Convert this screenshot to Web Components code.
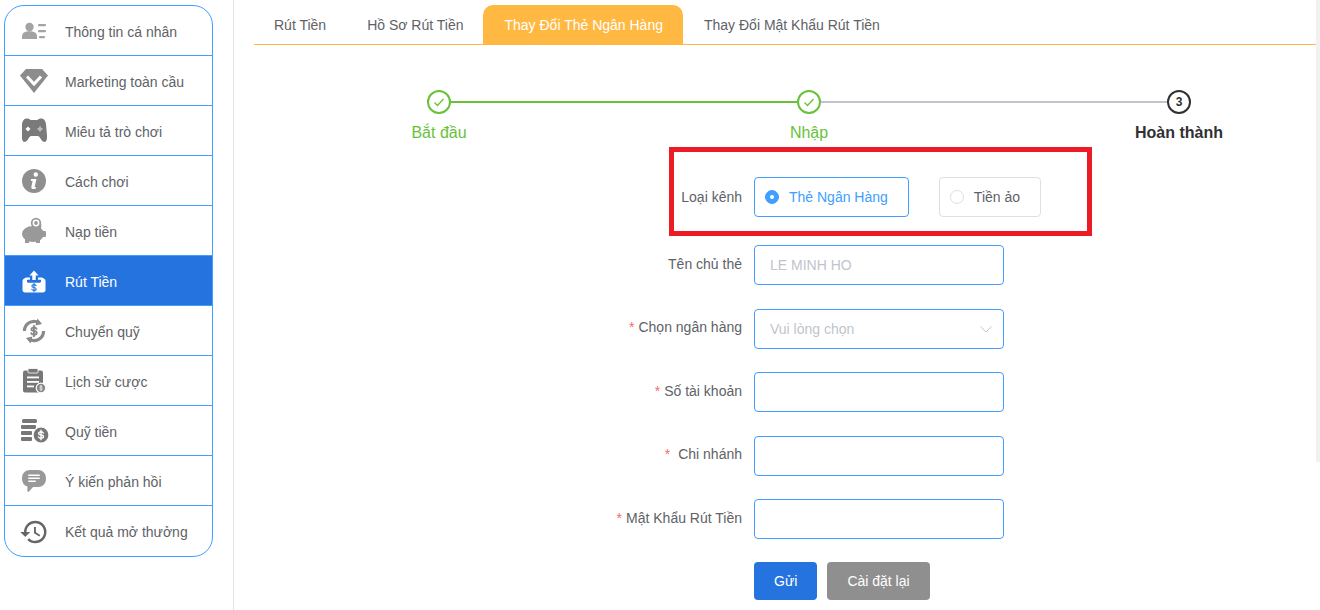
<!DOCTYPE html>
<html lang="vi"><head><meta charset="utf-8"><title>Thay Đổi Thẻ Ngân Hàng</title>
<style>
html,body{margin:0;padding:0;height:610px;overflow:hidden;background:#fff;font-family:"Liberation Sans",Arial,sans-serif;font-size:14px;color:#606266}
</style></head><body>
<app-shell>
  <side-menu slot="side">
    <menu-item icon="user">Thông tin cá nhân</menu-item>
    <menu-item icon="diamond">Marketing toàn cầu</menu-item>
    <menu-item icon="game">Miêu tả trò chơi</menu-item>
    <menu-item icon="info">Cách chơi</menu-item>
    <menu-item icon="pig">Nạp tiền</menu-item>
    <menu-item icon="up" active>Rút Tiền</menu-item>
    <menu-item icon="swap">Chuyển quỹ</menu-item>
    <menu-item icon="clip">Lịch sử cược</menu-item>
    <menu-item icon="coins">Quỹ tiền</menu-item>
    <menu-item icon="chat">Ý kiến phản hồi</menu-item>
    <menu-item icon="history" last>Kết quả mở thưởng</menu-item>
  </side-menu>
  <tab-bar>
    <tab-item>Rút Tiền</tab-item>
    <tab-item>Hồ Sơ Rút Tiền</tab-item>
    <tab-item active>Thay Đổi Thẻ Ngân Hàng</tab-item>
    <tab-item>Thay Đổi Mật Khẩu Rút Tiền</tab-item>
  </tab-bar>
  <step-bar>
    <step-item state="done" line="green">Bắt đầu</step-item>
    <step-item state="done" line="grey">Nhập</step-item>
    <step-item state="todo" num="3">Hoàn thành</step-item>
  </step-bar>
  <form-panel>
    <form-row label="Loại kênh" first>
      <radio-opt checked>Thẻ Ngân Hàng</radio-opt>
      <radio-opt>Tiền ảo</radio-opt>
      <red-mark></red-mark>
    </form-row>
    <form-row label="Tên chủ thẻ" lift="2"><text-box hint="LE MINH HO"></text-box></form-row>
    <form-row label="Chọn ngân hàng" req lift="4"><text-box hint="Vui lòng chọn" arrow></text-box></form-row>
    <form-row label="Số tài khoản" req lift="2"><text-box></text-box></form-row>
    <form-row label="&nbsp;Chi nhánh" req lift="3"><text-box></text-box></form-row>
    <form-row label="Mật Khẩu Rút Tiền" req lift="2"><text-box></text-box></form-row>
    <form-row btns>
      <action-btn kind="primary">Gửi</action-btn>
      <action-btn kind="grey">Cài đặt lại</action-btn>
    </form-row>
  </form-panel>
</app-shell>
<script>
const def=(name,html,extra={})=>{
  customElements.define(name,class extends HTMLElement{
    constructor(){super();this.attachShadow({mode:'open'}).innerHTML=html}
    connectedCallback(){extra.init&&extra.init.call(this)}
  });
};
const dollar=(x,y,s,c,w)=>`<g transform="translate(${x} ${y}) scale(${s})" fill="none" stroke="${c}" stroke-width="${w}" stroke-linecap="round"><path d="M2.400-2.100C2-3.100 1-3.400 0-3.400c-1.400 0-2.500.7-2.500 1.800S-1.400-.2 0 0s2.600.6 2.600 1.700S1.400 3.500 0 3.500c-1.100 0-2.100-.4-2.600-1.400M0-5V5"/></g>`;
const ICONS={
 user:`<g fill="#a3a3a3"><circle cx="10.500" cy="11" r="4.200"/><path d="M3 23v-2.500C3 17 6 15.200 10.500 15.200S18 17 18 20.500V23z"/><rect x="19" y="8" width="8" height="2.200" rx="1"/><rect x="19" y="14" width="8" height="2.200" rx="1"/><rect x="20" y="20" width="6" height="2.200" rx="1"/></g>`,
 diamond:`<path fill="#8c8c8c" d="M7 3h16l6 6.500L15 27 1 9.500z"/><path fill="none" stroke="#fff" stroke-width="3" d="M8 10.500l7 7.500 7-7.500"/>`,
 game:`<path fill="#7a7a7a" d="M8 2.500c1.500 0 2.500.5 3.500 1.500h7c1-1 2-1.500 3.500-1.500 3 0 4.500 2 5 5.500l1 11.500c.3 4-.8 6.500-2.500 6.500-2 0-3.500-2.500-5-5-.7-.8-1.500-1-2.500-1h-5c-1 0-1.800.2-2.500 1-1.500 2.500-3 5-5 5-1.700 0-2.800-2.500-2.500-6.500L3 8c.5-3.500 2-5.500 5-5.500z"/><path fill="#fff" d="M9 10.500l2.500 2.500L9 15.500 6.500 13z"/><path fill="#bbb" d="M20 10.500h2v1.500h1.500v2H22v1.500h-2V14h-1.500v-2H20z"/>`,
 info:`<circle cx="15" cy="15" r="12" fill="#8f8f8f"/><circle cx="16.800" cy="8.500" r="2.200" fill="#fff"/><path fill="#fff" d="M12 13h5.500l-1.800 7.500c-.1.600.3.800 1.500.5l-.4 1.500c-3 1.200-5 .5-4.400-2l1.200-5.500-1.800-.3z"/>`,
 pig:`<g fill="#999"><ellipse cx="14" cy="18" rx="11" ry="8"/><rect x="22" y="15" width="5" height="6" rx="1"/><path d="M18 11l4.500-3-.5 5zM6 23h4v4H6zM17 23h4v4h-4z"/><circle cx="17" cy="7" r="5.200"/></g><circle cx="17" cy="7" r="3.400" fill="#fff"/><circle cx="17" cy="7" r="1.900" fill="#999"/>`,
 up:`<path fill="#fff" d="M15 4.500l4.500 5h-2.800V14h-3.400V9.500H10.500z"/><path fill="#fff" d="M7 11.500h4v2.300H8v1.700c0 .8.500 1.200 1.200 1.200h11.600c.7 0 1.200-.4 1.200-1.200v-1.700h-3v-2.300h4c2 1 3.500 1.500 3.500 3.500v9c0 1.500-1 2.500-2.500 2.500H6c-1.500 0-2.500-1-2.500-2.500v-9c0-2 1.500-2.500 3.500-3.500z"/>`+dollar(15,21.5,.85,'#2573de',1.3),
 swap:`<g fill="none" stroke="#8a8a8a" stroke-width="3.200"><path d="M5.400 15A9.600 9.600 0 0 1 20 6.800"/><path d="M24.600 15A9.600 9.600 0 0 1 10 23.200"/></g><path fill="#8a8a8a" d="M18.500 2.500l4.500 5.500-6.500 1.500zM11.500 27.500L7 22l6.500-1.500z"/>`+dollar(15,15,1.05,'#8a8a8a',1.8),
 clip:`<rect x="4" y="4.500" width="20" height="22" rx="2" fill="#777"/><rect x="9" y="2.500" width="10" height="4.500" rx="1" fill="#777" stroke="#fff" stroke-width=".8"/><g fill="#fff"><rect x="8" y="10.500" width="12" height="1.800"/><rect x="8" y="15" width="12" height="1.800"/><rect x="8" y="19.500" width="7" height="1.800"/></g><circle cx="22" cy="22" r="4.800" fill="#888" stroke="#fff" stroke-width="1.200"/>`+dollar(22,22,.55,'#fff',1.2),
 coins:`<g fill="#777"><rect x="3" y="3" width="15" height="4" rx="1.500"/><rect x="2" y="9" width="15" height="4" rx="1"/><rect x="2" y="15" width="11" height="4" rx="1"/><rect x="2" y="21" width="11" height="4" rx="1"/></g><circle cx="22" cy="19" r="8" fill="#777" stroke="#fff" stroke-width="1.200"/>`+dollar(22,19,.95,'#fff',1.5),
 chat:`<path fill="#999" d="M11 4h8c4.500 0 8 3 8 8.500S23.500 21 19 21h-5l-4 4.500c-.8.700-1.600.4-1.600-.7V20.500C5 19.500 3 16.500 3 12.500 3 7 6.500 4 11 4z"/><g fill="#fff"><rect x="9" y="8.500" width="12" height="1.600" rx=".8"/><rect x="9" y="11.500" width="12" height="1.600" rx=".8"/><rect x="9" y="14.500" width="8" height="1.600" rx=".8"/></g>`,
 history:`<g transform="scale(1.250)"><path fill="#666" d="M13 3a9 9 0 0 0-9 9H1l3.890 3.890.07.140L9 12H6c0-3.870 3.130-7 7-7s7 3.130 7 7-3.130 7-7 7c-1.930 0-3.680-.790-4.940-2.060l-1.420 1.420A8.954 8.954 0 0 0 13 21a9 9 0 0 0 0-18zm-1 5v5l4.280 2.540.720-1.210-3.500-2.080V8H12z"/></g>`
};
def('app-shell',`<style>
:host{display:flex;width:1320px;height:610px;overflow:hidden;box-sizing:border-box}
.side{flex:none;width:234px;height:610px;box-sizing:border-box;padding:5px 0 0 4px;border-right:1px solid #e4e4e4}
.main{flex:none;width:1062px;margin-left:20px;padding-top:5px;box-sizing:border-box}
.bar{flex:none;width:4px;height:462px;background:#f1f1f1}
</style><div class="side"><slot name="side"></slot></div><div class="main"><slot></slot></div><div class="bar"></div>`);
def('side-menu',`<style>:host{display:block;width:209px;box-sizing:border-box;border:1px solid #409eff;border-radius:20px;overflow:hidden;background:#fff}</style><slot></slot>`);
def('menu-item',`<style>
:host{display:flex;align-items:center;height:50px;box-sizing:border-box;padding-top:2px;border-bottom:1px solid #409eff;color:#606266;font-size:14px}
:host([last]){border-bottom:0}
:host([active]){background:#2573de;color:#fff}
svg{flex:none;width:30px;height:30px;margin:-1px 16px 0 14px}
</style><svg viewBox="0 0 30 30" aria-hidden="true"></svg><slot></slot>`,{init(){this.shadowRoot.querySelector('svg').innerHTML=ICONS[this.getAttribute('icon')]}});
def('tab-bar',`<style>:host{display:flex;height:39px;border-bottom:1px solid #ffb942}</style><slot></slot>`);
def('tab-item',`<style>:host{display:block;padding:0 20.500px;height:39px;line-height:40px;font-size:14px;color:#606266;border-radius:10px 10px 0 0}
:host(:first-child){padding-left:20px}
:host([active]){background:#ffb942;color:#fff;margin-left:-1px;padding-left:21.500px}</style><slot></slot>`);
def('step-bar',`<style>:host{display:flex;width:1110px;margin-top:45px}</style><slot></slot>`);
def('step-item',`<style>
:host{display:block;flex:none;width:370px;position:relative;text-align:center;font-size:16px;color:#67c23a}
:host([state=todo]){color:#303133;font-weight:700}
.head{height:24px;display:flex;justify-content:center;position:relative}
.line{position:absolute;left:197px;width:346px;top:11px;height:2px;background:#67c23a}
.line.grey{background:#c0c4cc}
.line.none{display:none}
.dot{box-sizing:border-box;width:24px;height:24px;border:2px solid currentColor;border-radius:50%;display:flex;align-items:center;justify-content:center;font-size:12px;font-weight:700;line-height:20px;background:#fff}
.dot svg{width:14px;height:14px}
.title{margin-top:7px;line-height:24px;height:24px}
</style><div class="head"><div class="line"></div><div class="dot"></div></div><div class="title"><slot></slot></div>`,{init(){
  const s=this.shadowRoot,l=this.getAttribute('line'),n=this.getAttribute('num');
  s.querySelector('.line').className='line '+(l==='grey'?'grey':l?'':'none');
  s.querySelector('.dot').innerHTML=n?n:'<svg viewBox="0 0 14 14"><path d="M2.500 7.500l3 3 6-6.500" fill="none" stroke="#67c23a" stroke-width="1.300"/></svg>';
}});
def('form-panel',`<style>:host{display:flex;flex-direction:column;gap:23.500px;margin-top:32px}</style><slot></slot>`);
def('form-row',`<style>
:host{display:flex;position:relative;height:40px;align-items:center}
:host([first]){margin-bottom:4.500px}
:host([btns]){height:38px;margin-top:-.5px}
.lab{flex:none;width:488px;margin-right:12px;text-align:right;font-size:14px;color:#606266;box-sizing:border-box}
.req{color:#f56c6c;margin-right:4px;display:none}
.ctl{display:flex;align-items:center}
</style><div class="lab"><span class="req">*</span><span class="txt"></span></div><div class="ctl"><slot></slot></div>`,{init(){
  const s=this.shadowRoot;
  s.querySelector('.txt').textContent=this.getAttribute('label')||'';
  if(this.hasAttribute('req'))s.querySelector('.req').style.display='inline';
  const p=this.getAttribute('lift'); if(p)s.querySelector('.lab').style.paddingBottom=p+'px';
}});
def('radio-opt',`<style>
:host{display:flex;align-items:center;box-sizing:border-box;height:40px;padding:0 20px 0 10px;border:1px solid #dcdfe6;border-radius:4px;margin-right:30px;font-size:14px;color:#606266}
:host([checked]){border-color:#409eff;color:#409eff}
i{box-sizing:border-box;width:14px;height:14px;border-radius:50%;border:1px solid #dcdfe6;margin-right:10px;flex:none;display:flex;align-items:center;justify-content:center;background:#fff}
:host([checked]) i{background:#409eff;border-color:#409eff}
:host([checked]) i::after{content:"";width:4px;height:4px;border-radius:50%;background:#fff}
</style><i></i><slot></slot>`);
def('red-mark',`<style>:host{display:block;position:absolute;left:415px;top:-30px;width:423px;height:89px;box-sizing:border-box;border:5px solid #ed1c24;pointer-events:none}</style>`);
def('text-box',`<style>
:host{display:flex;align-items:center;justify-content:space-between;box-sizing:border-box;width:250px;height:40px;border:1px solid #409eff;border-radius:4px;padding:0 15px;font-size:14px;color:#c0c4cc}
svg{width:14px;height:14px;margin-right:-5px}
</style><span></span>`,{init(){
  const s=this.shadowRoot;
  if(this.hasAttribute('arrow'))s.innerHTML+='<svg viewBox="0 0 14 14"><path d="M1.500 4.500L7 10l5.500-5.500" fill="none" stroke="#c0c4cc" stroke-width="1"/></svg>';
  s.querySelector('span').textContent=this.getAttribute('hint')||'';
}});
def('action-btn',`<style>
:host{display:block;box-sizing:border-box;height:38px;line-height:38px;padding:0 20px;border-radius:4px;font-size:14px;color:#fff;margin-right:10px;background:#2573de}
:host([kind=grey]){background:#8f8f8f}
</style><slot></slot>`);
</script></body></html>
